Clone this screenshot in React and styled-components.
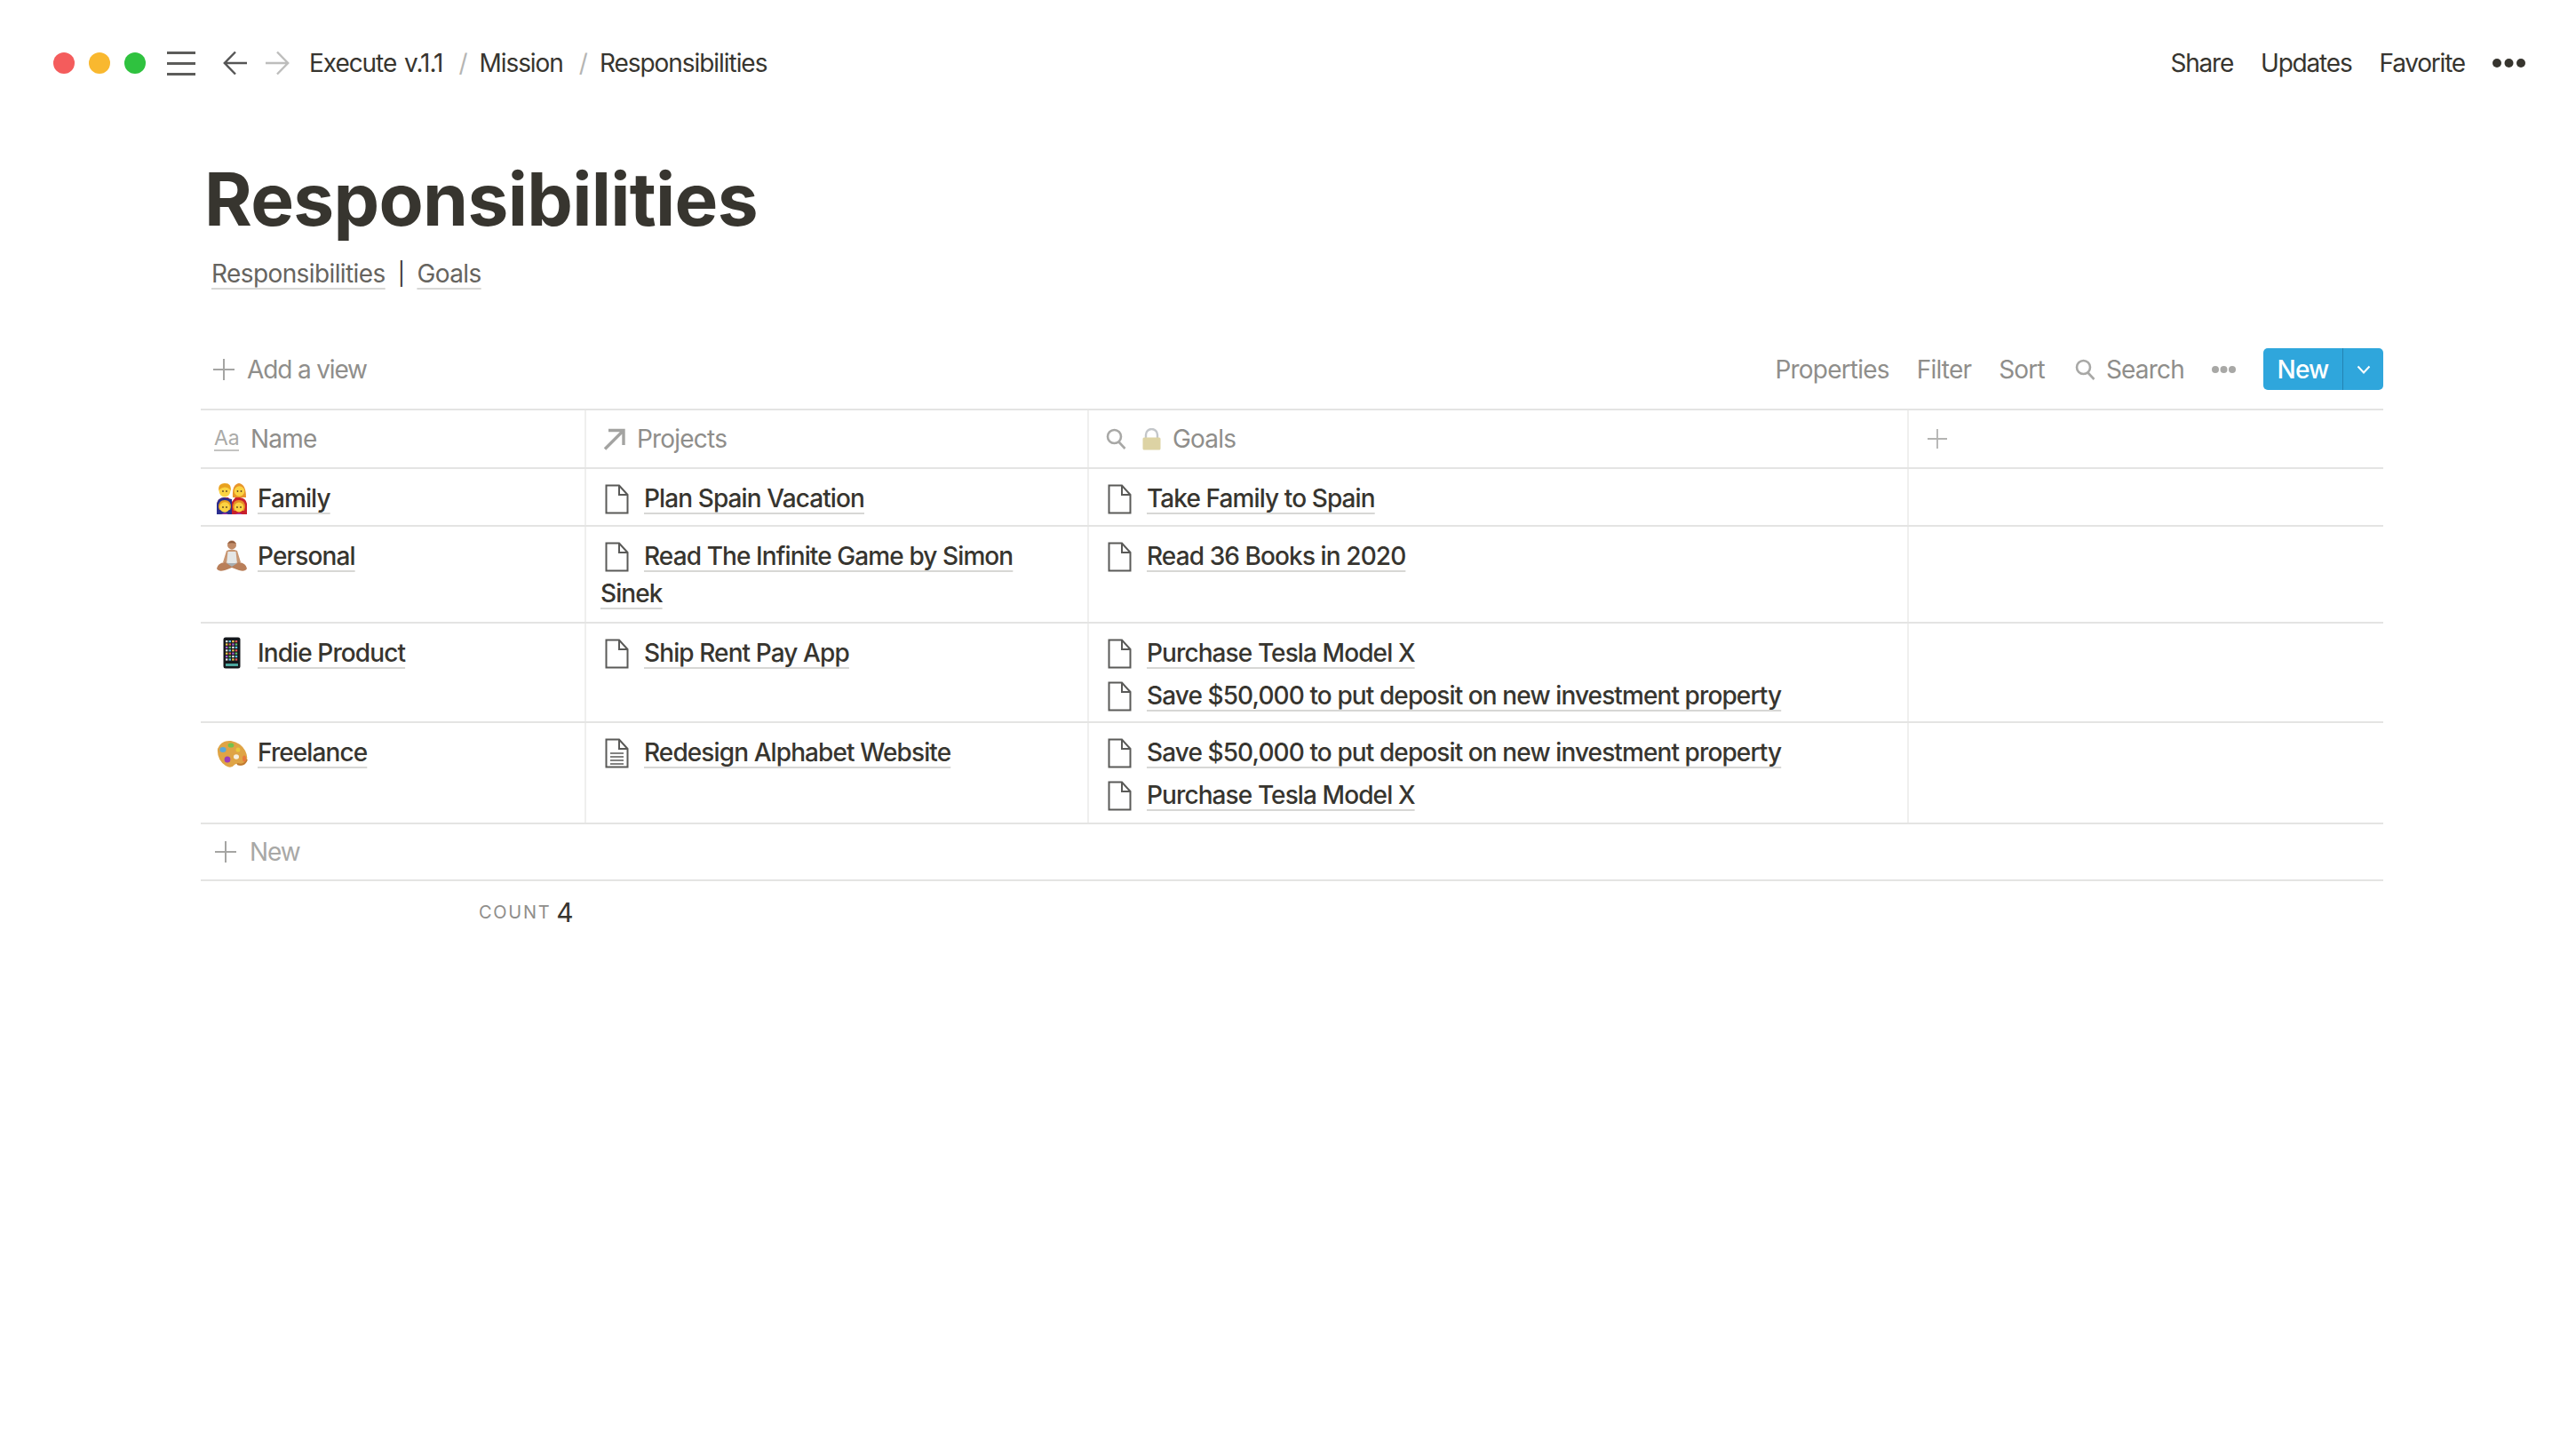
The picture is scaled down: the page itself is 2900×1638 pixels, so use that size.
import React from "react"
import styled, { createGlobalStyle } from "styled-components"

const GlobalStyle = createGlobalStyle`
	html, body {
		margin: 0;
		padding: 0;
		background: #fff;
	}
	body {
		font-family: Inter, "Liberation Sans", sans-serif;
		font-size: 28px;
		color: #37352f;
		letter-spacing: -0.8px;
	}
`

const DocIcon = ({ lines }) => (
	<DocSvg viewBox="0 0 27 34" fill="none" stroke="#5a5a58" strokeWidth="2">
		<path d="M1.5 1.5 H16 L25.5 12 V32.5 H1.5 Z" />
		<path d="M16 1.5 V12 H25.5" />
		{lines && <path d="M6 17 H21 M6 21 H21 M6 25 H21 M6 29 H21" strokeWidth="1.6" />}
	</DocSvg>
)

const PlusIcon = ({ size = 24, color = "#a5a5a3" }) => (
	<svg width={size} height={size} viewBox="0 0 24 24" stroke={color} strokeWidth="2" style={{ flexShrink: 0 }}>
		<path d="M12 0 V24 M0 12 H24" />
	</svg>
)

const SearchIcon = ({ color = "#a8a8a6" }) => (
	<svg width="23" height="24" viewBox="0 0 23 24" fill="none" stroke={color} strokeWidth="2.6">
		<circle cx="9.5" cy="9.5" r="7.5" />
		<path d="M14.5 15.5 L21.5 23" />
	</svg>
)

const MoreDots = ({ width, r, color }) => (
	<svg width={width} height={r * 2} viewBox={`0 0 ${width} ${r * 2}`} fill={color}>
		<circle cx={r} cy={r} r={r} />
		<circle cx={width / 2} cy={r} r={r} />
		<circle cx={width - r} cy={r} r={r} />
	</svg>
)

const ArrowLeft = ({ color, flip }) => (
	<svg width="28" height="28" viewBox="0 0 28 28" fill="none" stroke={color} strokeWidth="2.4" style={flip ? { transform: "scaleX(-1)" } : undefined}>
		<path d="M27 14 H2 M14 1.5 L1.8 14 L14 26.5" />
	</svg>
)

const LinkArrow = () => (
	<svg width="25" height="25" viewBox="0 0 25 25" fill="none" stroke="#a3a3a1" strokeWidth="3.4">
		<path d="M2 23.5 L22.5 3 M6 2.5 H23 V19" />
	</svg>
)

const LockEmoji = () => (
	<svg width="21" height="25" viewBox="0 0 21 25">
		<path d="M4 12 V7.5 a6.5 6.5 0 0 1 13 0 V12" fill="none" stroke="#c3c6c9" strokeWidth="2.4" />
		<rect x="0.5" y="10.5" width="20" height="14" rx="1.5" fill="#ddd3a4" />
	</svg>
)

const FamilyEmoji = () => (
	<svg width="36" height="36" viewBox="0 0 36 36">
		<path d="M1 36 V24 Q2 18 9 17 H14 L18 22 L22 17 H27 Q34 18 35 24 V36 Z" fill="#c8202c" />
		<path d="M1 36 V24 Q2 18 9 17 L18 19 V36 Z" fill="#2b2f8f" />
		<path d="M3 8 Q3 1 10 1 Q17 1 17 8 L16 10 H4 Z" fill="#f0a92a" />
		<circle cx="10" cy="10" r="6.4" fill="#fbd343" />
		<path d="M4 8 Q10 3 16 8 L16 4 Q10 -1 4 4 Z" fill="#e8a11f" />
		<path d="M19 17 Q18 2 26 1 Q34 2 34 17 Z" fill="#e8952a" />
		<circle cx="26.500" cy="10" r="5.800" fill="#fbd343" />
		<path d="M3 28 Q3 20 10 20 Q17 20 17 28 L16 31 H4 Z" fill="#e8a11f" />
		<circle cx="10" cy="28" r="5.800" fill="#fbd343" />
		<path d="M19 28 Q19 20 26 20 Q33 20 33 28 L32 32 H20 Z" fill="#e58d25" />
		<circle cx="26" cy="28" r="5.400" fill="#fbd343" />
		<path d="M6 36 Q10 33 14 36 Z M22 36 Q26 33 30 36 Z" fill="#a333a5" />
		<g fill="#5d4320">
			<circle cx="8" cy="10" r="0.9" /><circle cx="12" cy="10" r="0.9" />
			<circle cx="24.500" cy="10" r="0.9" /><circle cx="28.500" cy="10" r="0.9" />
			<circle cx="8" cy="28" r="0.9" /><circle cx="12" cy="28" r="0.9" />
			<circle cx="24" cy="28" r="0.9" /><circle cx="28" cy="28" r="0.9" />
		</g>
	</svg>
)

const PersonEmoji = () => (
	<svg width="36" height="36" viewBox="0 0 36 36">
		<path d="M12 12 Q18 9 24 12 L28 25 L25 26 L18 20 L11 26 L8 25 Z" fill="#c89672" />
		<circle cx="18" cy="5.500" r="5" fill="#c08a66" />
		<path d="M13 4 Q18 -2 23 4 Q18 2.500 13 4 Z" fill="#8c5a3c" />
		<path d="M13.500 13 H22.500 L24 27 H12 Z" fill="#e4e6e6" />
		<path d="M1 32 Q2 26 10 25 L18 27 L26 25 Q34 26 35 32 Q33 36 26 34 L18 31 L10 34 Q3 36 1 32 Z" fill="#b97f5a" />
		<path d="M12 26 H24 L18 30 Z" fill="#a8adb0" />
	</svg>
)

const PHONE_COLORS = ["#e8e8e8", "#5cc8e8", "#f2c84b", "#e85a5a", "#a35cd8", "#62c46a"]

const PhoneEmoji = () => (
	<svg width="20" height="36" viewBox="0 0 20 36">
		<rect x="0.5" y="0.5" width="19" height="35" rx="2.500" fill="#15181c" />
		{[0, 1, 2, 3, 4, 5, 6].map((row) =>
			[0, 1, 2, 3].map((col) => (
				<rect
					key={`${row}-${col}`}
					x={3 + col * 3.6}
					y={4 + row * 3.4}
					width="2.400"
					height="2.200"
					fill={PHONE_COLORS[(row * 2 + col) % PHONE_COLORS.length]}
				/>
			))
		)}
		<rect x="3" y="30" width="14" height="3" fill="#4ca8a0" />
	</svg>
)

const PaletteEmoji = () => (
	<svg width="36" height="32" viewBox="0 0 36 32">
		<path d="M2 10 Q6 0 17 1 Q28 3 33 12 Q37 20 34 25 Q32 30 26 28 Q23 26 21 28 Q17 33 11 29 Q1 22 2 10 Z" fill="#dfa445" />
		<path d="M24 27 Q32 30 35 22" fill="none" stroke="#c07a30" strokeWidth="2" />
		<ellipse cx="8" cy="11" rx="3.600" ry="3" fill="#5aa8d8" />
		<ellipse cx="17" cy="6" rx="3.400" ry="2.600" fill="#74c24e" />
		<ellipse cx="25" cy="11" rx="2.400" ry="2.600" fill="#e8c83c" />
		<ellipse cx="13" cy="22" rx="3.400" ry="3.600" fill="#9c3cb8" />
		<ellipse cx="32" cy="21" rx="2" ry="3.600" fill="#e87a3c" />
		<ellipse cx="23" cy="19" rx="3" ry="2.800" fill="#f6efe0" />
	</svg>
)

const rows = [
	{
		id: "family",
		height: 65,
		name: "Family",
		emoji: <FamilyEmoji />,
		projects: [{ title: "Plan Spain Vacation" }],
		goals: ["Take Family to Spain"],
	},
	{
		id: "personal",
		height: 109,
		name: "Personal",
		emoji: <PersonEmoji />,
		projects: [{ title: "Read The Infinite Game by Simon Sinek" }],
		goals: ["Read 36 Books in 2020"],
	},
	{
		id: "indie",
		height: 112,
		name: "Indie Product",
		emoji: <PhoneEmoji />,
		projects: [{ title: "Ship Rent Pay App" }],
		goals: ["Purchase Tesla Model X", "Save $50,000 to put deposit on new investment property"],
	},
	{
		id: "freelance",
		height: 114,
		name: "Freelance",
		emoji: <PaletteEmoji />,
		projects: [{ title: "Redesign Alphabet Website", lines: true }],
		goals: ["Save $50,000 to put deposit on new investment property", "Purchase Tesla Model X"],
	},
]

function App() {
	return (
		<>
			<GlobalStyle />
			<TopBar>
				<TopLeft>
					<TrafficLights>
						<Light $color="#f45c5c" />
						<Light $color="#f9b82f" />
						<Light $color="#2fc23f" />
					</TrafficLights>
					<Hamburger>
						<span />
						<span />
						<span />
					</Hamburger>
					<Arrows>
						<ArrowLeft color="#555" />
						<ArrowLeft color="#bdbdbc" flip />
					</Arrows>
					<Crumbs>
						<span>Execute v.1.1</span>
						<CrumbSlash>/</CrumbSlash>
						<span>Mission</span>
						<CrumbSlash>/</CrumbSlash>
						<span>Responsibilities</span>
					</Crumbs>
				</TopLeft>
				<TopRight>
					<span>Share</span>
					<span>Updates</span>
					<span>Favorite</span>
					<MoreDots width={37} r={5} color="#37352f" />
				</TopRight>
			</TopBar>

			<Page>
				<Title>Responsibilities</Title>
				<SubLinks>
					<SubLink>Responsibilities</SubLink>
					<SubBar>|</SubBar>
					<SubLink>Goals</SubLink>
				</SubLinks>

				<Toolbar>
					<AddView>
						<PlusIcon />
						<span>Add a view</span>
					</AddView>
					<ToolActions>
						<span>Properties</span>
						<span>Filter</span>
						<span>Sort</span>
						<SearchBox>
							<SearchIcon />
							<span>Search</span>
						</SearchBox>
						<MoreDots width={27} r={4} color="#a8a8a6" />
						<NewButton>
							<NewLabel>New</NewLabel>
							<NewCaret>
								<svg width="16" height="10" viewBox="0 0 16 10" fill="none" stroke="#fff" strokeWidth="2">
									<path d="M1.500 1.500 L8 8.500 L14.500 1.500" />
								</svg>
							</NewCaret>
						</NewButton>
					</ToolActions>
				</Toolbar>

				<Table>
					<Row $height={66}>
						<NameHeader>
							<AaMark>Aa</AaMark>
							<span>Name</span>
						</NameHeader>
						<HeaderCell>
							<LinkArrow />
							<span>Projects</span>
						</HeaderCell>
						<GoalsHeader>
							<SearchIcon />
							<LockEmoji />
							<span>Goals</span>
						</GoalsHeader>
						<AddColumnCell>
							<PlusIcon size={22} color="#b4b4b2" />
						</AddColumnCell>
					</Row>

					{rows.map((row) => (
						<Row key={row.id} $height={row.height}>
							<NameCell>
								<EmojiSlot>{row.emoji}</EmojiSlot>
								<PageLink>{row.name}</PageLink>
							</NameCell>
							<Cell>
								{row.projects.map((project) => (
									<Item key={project.title}>
										<DocIcon lines={project.lines} />
										<PageLink>{project.title}</PageLink>
									</Item>
								))}
							</Cell>
							<Cell>
								{row.goals.map((goal) => (
									<Item key={goal}>
										<DocIcon />
										<PageLink>{goal}</PageLink>
									</Item>
								))}
							</Cell>
							<Cell />
						</Row>
					))}

					<NewRow>
						<PlusIcon />
						<span>New</span>
					</NewRow>
				</Table>

				<CountRow>
					<CountLabel>COUNT</CountLabel>
					<CountValue>4</CountValue>
				</CountRow>
			</Page>
		</>
	)
}

const TopBar = styled.header`
	height: 142px;
	padding: 0 57px 0 60px;
	display: flex;
	align-items: center;
	justify-content: space-between;
	box-sizing: border-box;
`

const TopLeft = styled.div`
	display: flex;
	align-items: center;
`

const TopRight = styled.div`
	display: flex;
	align-items: center;
	gap: 31px;
	letter-spacing: -1.2px;
`

const TrafficLights = styled.div`
	display: flex;
	gap: 16px;
`

const Light = styled.span`
	width: 24px;
	height: 24px;
	border-radius: 50%;
	background: ${(p) => p.$color};
`

const Hamburger = styled.div`
	width: 32px;
	height: 27px;
	margin-left: 24px;
	display: flex;
	flex-direction: column;
	justify-content: space-between;

	span {
		height: 3px;
		background: #5c5c5a;
	}
`

const Arrows = styled.div`
	display: flex;
	gap: 19px;
	margin-left: 31px;
`

const Crumbs = styled.nav`
	display: flex;
	align-items: center;
	margin-left: 22px;
	letter-spacing: -1.05px;
	word-spacing: 2px;
`

const CrumbSlash = styled.span`
	color: #b5b5b3;
	margin: 0 14px 0 18px;
`

const Page = styled.main`
	padding: 0 217px 0 226px;
`

const Title = styled.h1`
	margin: 35px 0 0;
	padding-left: 4px;
	font-size: 82px;
	line-height: 96px;
	font-weight: 700;
	letter-spacing: -0.7px;
	color: #37352f;
`

const SubLinks = styled.div`
	margin-top: 14px;
	padding-left: 12px;
	height: 42px;
	line-height: 42px;
	display: flex;
	gap: 14px;
	letter-spacing: -0.6px;
`

const SubLink = styled.span`
	color: #66645f;
	text-decoration: underline;
	text-decoration-color: rgba(55, 53, 47, 0.2);
	text-decoration-thickness: 2px;
	text-underline-offset: 6px;
	text-decoration-skip-ink: none;
`

const SubBar = styled.span`
	color: #37352f;
	font-size: 25px;
`

const Toolbar = styled.div`
	margin-top: 63px;
	margin-bottom: 21px;
	height: 47px;
	display: flex;
	align-items: center;
	justify-content: space-between;
	color: #8f8e8b;
`

const AddView = styled.div`
	display: flex;
	align-items: center;
	gap: 14px;
	padding-left: 14px;
	letter-spacing: -1.15px;
`

const ToolActions = styled.div`
	display: flex;
	align-items: center;
	gap: 31px;
`

const SearchBox = styled.div`
	display: flex;
	align-items: center;
	gap: 12px;
	padding-left: 3px;
`

const NewButton = styled.div`
	display: flex;
	height: 47px;
	width: 135px;
	border-radius: 5px;
	overflow: hidden;
	background: #2fa6dc;
	color: #fff;
	font-weight: 500;
`

const NewLabel = styled.span`
	width: 89px;
	display: flex;
	align-items: center;
	justify-content: center;
	border-right: 1px solid #2384b3;
`

const NewCaret = styled.span`
	flex: 1;
	display: flex;
	align-items: center;
	justify-content: center;
`

const Table = styled.section`
	border-top: 2px solid #e4e4e3;
`

const Row = styled.div`
	display: grid;
	grid-template-columns: 434px 566px 923px 534px;
	height: ${(p) => p.$height}px;
	box-sizing: border-box;
	border-bottom: 2px solid #e4e4e3;
`

const Cell = styled.div`
	padding: 12px 16px 0;
	border-right: 2px solid #efefee;
	line-height: 42px;
	display: flex;
	flex-direction: column;
	gap: 6px;
	box-sizing: border-box;

	&:last-child {
		border-right: 0;
	}
`

const HeaderCell = styled(Cell)`
	padding: 0 0 0 19px;
	flex-direction: row;
	align-items: center;
	gap: 13px;
	color: #8f8e8b;
`

const NameHeader = styled(HeaderCell)`
	padding-left: 15px;
`

const GoalsHeader = styled(HeaderCell)`
	gap: 15px;

	svg + svg {
		margin: 0 -2px 0 3px;
	}
`

const AddColumnCell = styled(HeaderCell)`
	padding-left: 21px;
`

const NameCell = styled(Cell)`
	display: block;
	padding-left: 17px;
	white-space: nowrap;
`

const EmojiSlot = styled.span`
	display: inline-flex;
	width: 36px;
	height: 36px;
	align-items: center;
	justify-content: center;
	margin-right: 11px;
	vertical-align: -8px;
`

const AaMark = styled.span`
	width: 28px;
	font-size: 23px;
	line-height: 26px;
	letter-spacing: 0;
	color: #aaaaa8;
	border-bottom: 2px solid #c4c4c2;
`

const Item = styled.div`
	line-height: 42px;
`

const DocSvg = styled.svg`
	width: 27px;
	height: 34px;
	margin: 0 17px 0 5px;
	vertical-align: -8px;
`

const PageLink = styled.span`
	font-weight: 500;
	letter-spacing: -0.9px;
	text-decoration: underline;
	text-decoration-color: rgba(55, 53, 47, 0.2);
	text-decoration-thickness: 2px;
	text-underline-offset: 6px;
	text-decoration-skip-ink: none;
`

const NewRow = styled.div`
	height: 64px;
	box-sizing: border-box;
	border-bottom: 2px solid #e4e4e3;
	padding-left: 16px;
	display: flex;
	align-items: center;
	gap: 15px;
	color: #a8a8a6;
	letter-spacing: -1.1px;
`

const CountRow = styled.div`
	margin-top: 15px;
	padding-left: 313px;
	display: flex;
	align-items: center;
	gap: 6px;
	height: 40px;
`

const CountLabel = styled.span`
	font-size: 20px;
	letter-spacing: 1.7px;
	color: #8f8e8b;
`

const CountValue = styled.span`
	font-size: 30px;
	letter-spacing: 0;
`

export default App
